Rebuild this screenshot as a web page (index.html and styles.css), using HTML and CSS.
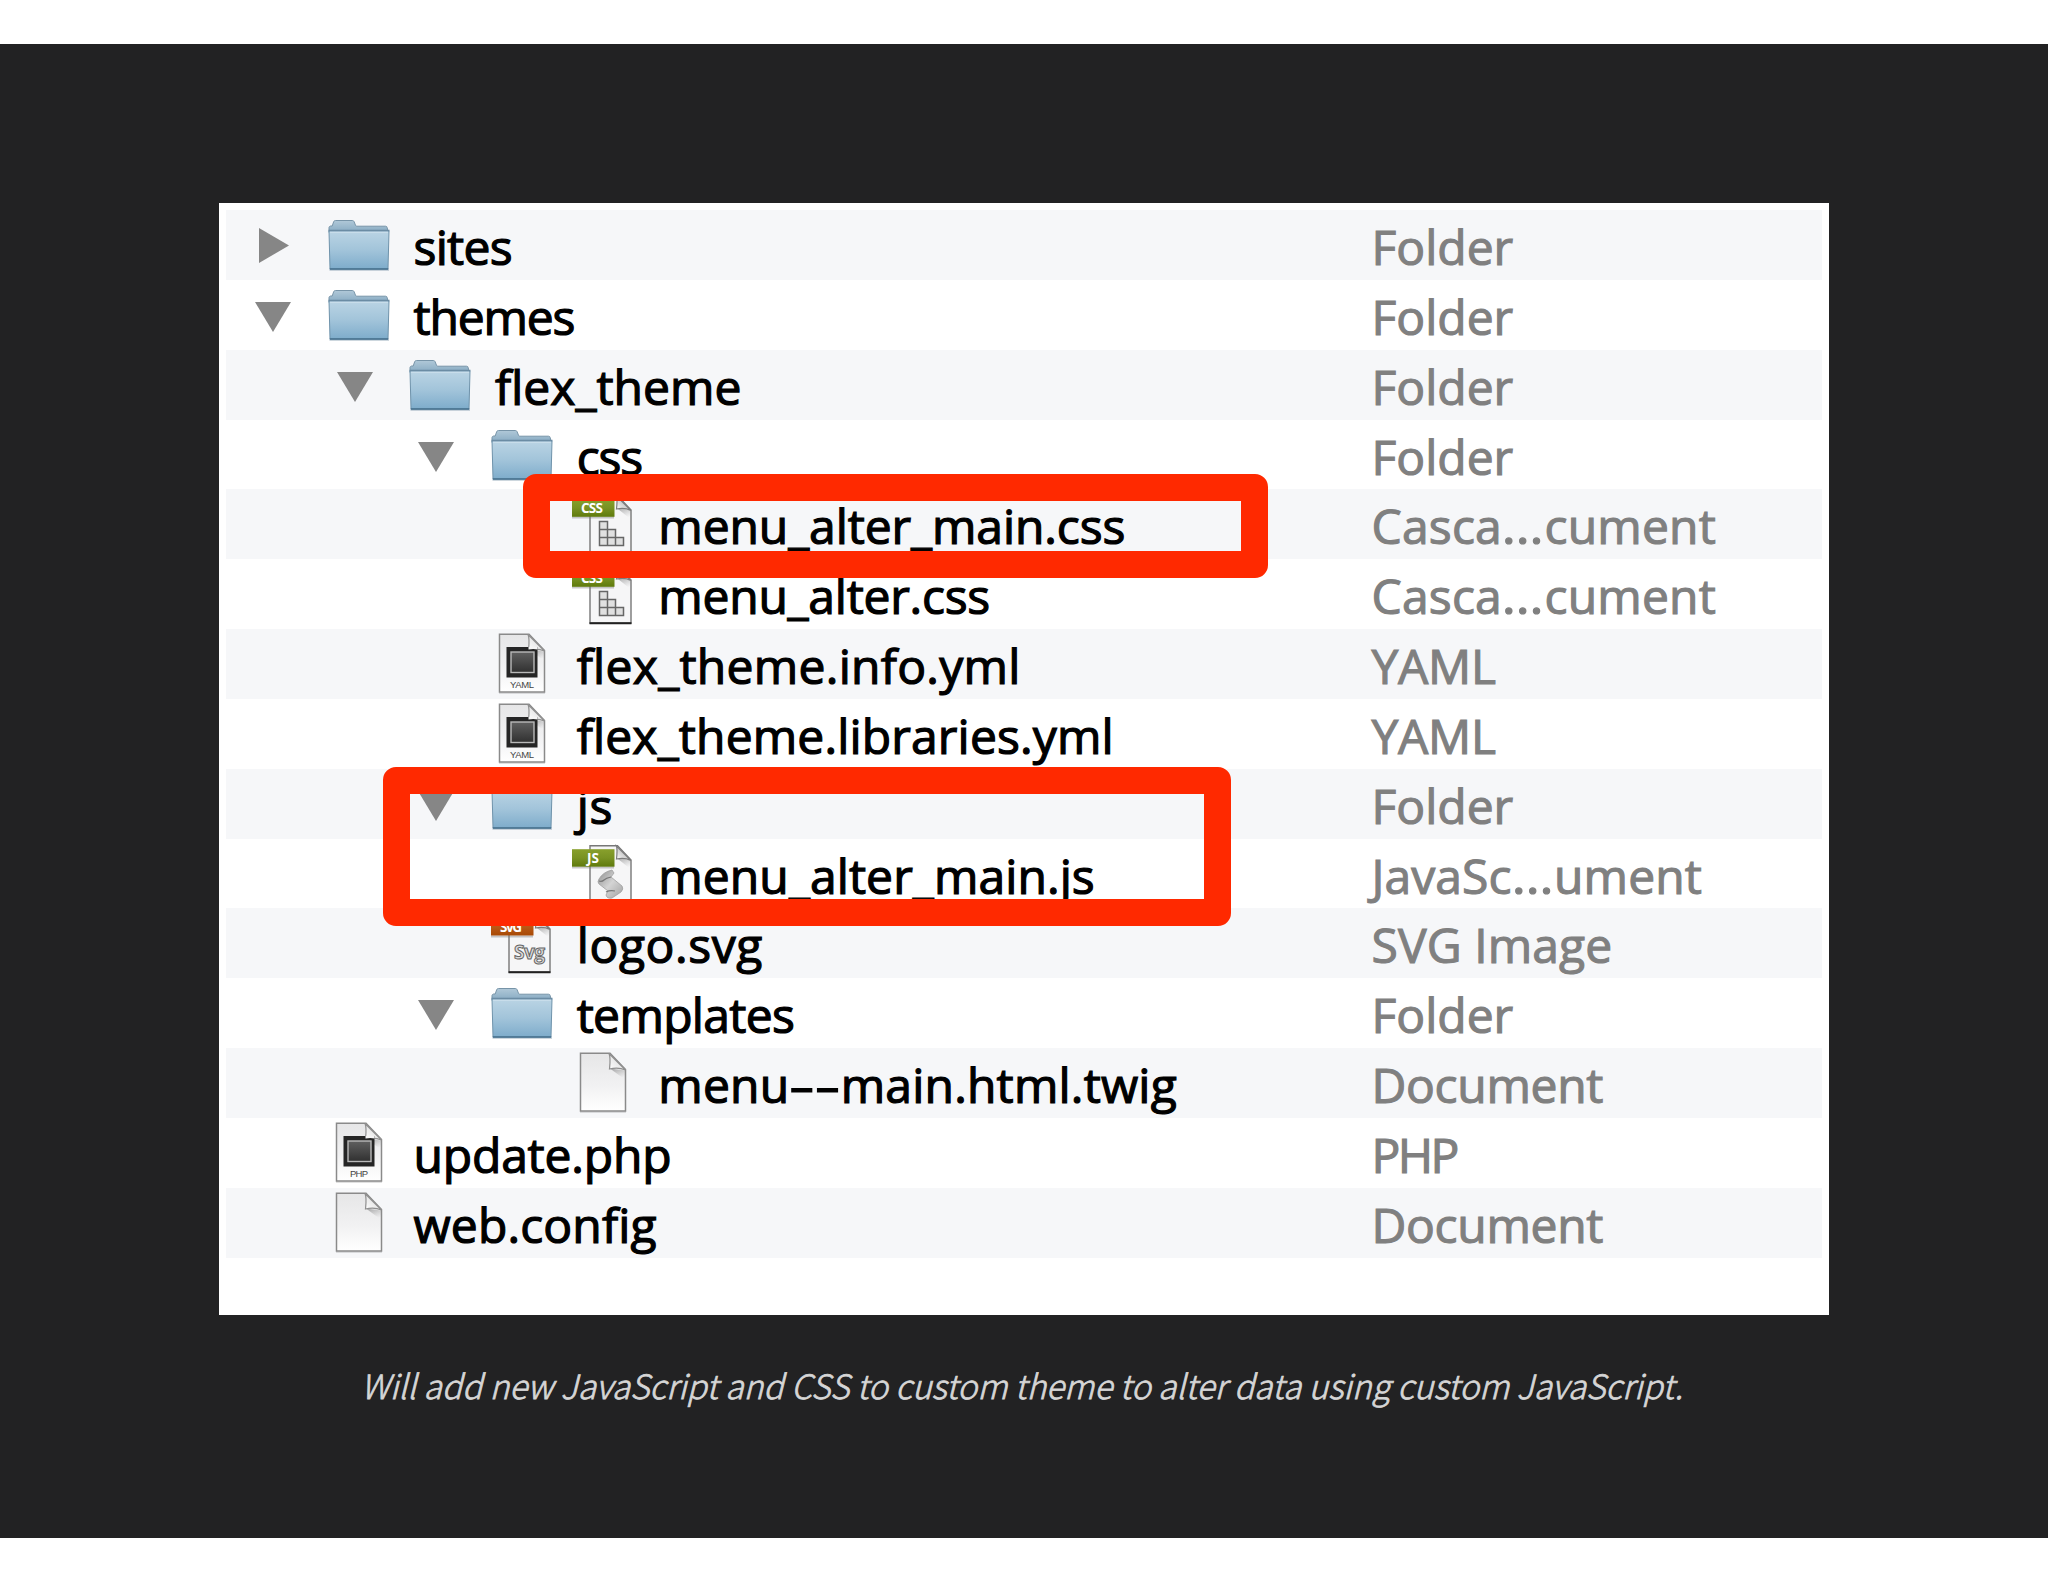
FILE: index.html
```
<!DOCTYPE html>
<html lang="en">
<head>
<meta charset="utf-8">
<title>Theme files</title>
<link rel="stylesheet" href="styles.css">
</head>
<body>
<svg class="defs" aria-hidden="true">
  <defs>
    <linearGradient id="gFront" x1="0" y1="0" x2="0" y2="1"><stop offset="0" stop-color="#bad4e4"/><stop offset=".5" stop-color="#a2c4da"/><stop offset="1" stop-color="#7eaccb"/></linearGradient>
    <linearGradient id="gBack" x1="0" y1="0" x2="0" y2="1"><stop offset="0" stop-color="#b0c8d8"/><stop offset="1" stop-color="#86aac2"/></linearGradient>
    <linearGradient id="gPage" x1="0" y1="0" x2="0" y2="1"><stop offset="0" stop-color="#e6e6e7"/><stop offset=".55" stop-color="#f1f1f2"/><stop offset="1" stop-color="#ffffff"/></linearGradient>
    <linearGradient id="gFold" x1="0" y1="1" x2="1" y2="0"><stop offset="0" stop-color="#ffffff"/><stop offset=".5" stop-color="#e8e8e8"/><stop offset="1" stop-color="#a8a8a8"/></linearGradient>
    <linearGradient id="gFoldDark" x1="0" y1="1" x2="1" y2="0"><stop offset="0" stop-color="#ffffff"/><stop offset=".45" stop-color="#cfcfcf"/><stop offset="1" stop-color="#777777"/></linearGradient>
    <linearGradient id="gShade" x1="0" y1="0" x2=".6" y2="1"><stop offset="0" stop-color="#777" stop-opacity=".65"/><stop offset="1" stop-color="#999" stop-opacity="0"/></linearGradient>
    <linearGradient id="gChip" x1="0" y1="0" x2="0" y2="1"><stop offset="0" stop-color="#606060"/><stop offset="1" stop-color="#303030"/></linearGradient>
    <linearGradient id="gGreen" x1="0" y1="0" x2="0" y2="1"><stop offset="0" stop-color="#88a02c"/><stop offset=".5" stop-color="#799223"/><stop offset="1" stop-color="#5f7a0c"/></linearGradient>
    <linearGradient id="gOrange" x1="0" y1="0" x2="0" y2="1"><stop offset="0" stop-color="#c9682a"/><stop offset="1" stop-color="#a84a05"/></linearGradient>
    <linearGradient id="gScroll" x1="0" y1="0" x2="1" y2="1"><stop offset="0" stop-color="#8e8e8e"/><stop offset=".5" stop-color="#d4d4d4"/><stop offset="1" stop-color="#a2a2a2"/></linearGradient>

    <symbol id="folder" viewBox="0 0 70 70">
      <path d="M5.5 58.8h59.5v2.2h-59.5z" fill="#5b7c93" opacity=".3"/>
      <path d="M5 22.500V17.500q0-1 1.500-1.500h1.700l1.500-4.300q.4-1.200 1.800-1.200h16.800q1.300 0 1.800 1.200l1.500 3.800q.3.700 1.200.7h28.700q1.500 0 1.700 1.500l.8 3.500z" fill="url(#gBack)" stroke="#7794a8" stroke-width="1"/>
      <path d="M5 21h60l-1 38H6z" fill="url(#gFront)" stroke="#6f93ab" stroke-width="1"/>
      <path d="M4.500 20.500h61" stroke="#6b8ca4" stroke-width="1.400"/>
      <path d="M6 22.200h58" stroke="#cfe2ee" stroke-width="1"/>
      <path d="M5.800 59h58.400" stroke="#456f8d" stroke-width="1.600"/>
    </symbol>
    <symbol id="page" viewBox="0 0 70 70">
      <path d="M12 64h46" stroke="#999" stroke-width="1.500" opacity=".4"/>
      <path d="M12.500 5.200h29.500L57.500 21.500V63H12.500z" fill="url(#gPage)" stroke="#8a8a8a" stroke-width="1.500"/>
      <path d="M42 20.500l4 3 11 8v-9z" fill="url(#gShade)"/>
      <path d="M41 5.500c1.800 4 1 10 .5 15.500C47 19.500 52 19.500 57.500 22z" fill="url(#gFold)" stroke="#8f8f8f" stroke-width="1.200"/>
    </symbol>
    <symbol id="chip" viewBox="0 0 70 70">
      <rect x="19.500" y="18" width="31" height="30.500" fill="#252525"/>
      <rect x="24" y="23" width="23" height="20.500" fill="url(#gChip)" stroke="#b9b9b9" stroke-width="1.400"/>
      <path d="M41.500 18v2.500q5-1 9 0V18z" fill="#f4f4f4"/>
    </symbol>
    <symbol id="badged" viewBox="0 0 70 70">
      <path d="M22 6.800h27.500L63 21V64H22z" fill="#f6f6f7" stroke="#777" stroke-width="1.400"/>
      <path d="M21.500 64.200h42" stroke="#222" stroke-width="2"/>
      <path d="M48.500 19l4 3 10 8v-9z" fill="url(#gShade)"/>
      <path d="M48.500 7c1 3.500.5 8.500 0 13 5-1.200 10-1 14.500 1.500z" fill="url(#gFoldDark)" stroke="#7c7c7c" stroke-width="1.200"/>
    </symbol>
    <symbol id="down" viewBox="0 0 36 30"><path d="M0 0h36L18 30z" fill="#868686"/></symbol>
    <symbol id="right" viewBox="0 0 30 35"><path d="M0 0v35L30 17.500z" fill="#868686"/></symbol>

    <symbol id="css" viewBox="0 0 70 70">
      <use href="#badged"/>
      <path d="M4 27.500h42v2H4z" fill="#777" opacity=".4"/>
      <rect x="4" y="10" width="42.500" height="17.800" fill="url(#gGreen)"/>
      <text x="24" y="23.800" class="tag" textLength="22">CSS</text>
      <path d="M31.500 32.500h8v8h-8zM31.500 40.500h8v8h-8zM39.500 40.500h8v8h-8zM31.500 48.500h8v8h-8zM39.500 48.500h8v8h-8zM47.500 48.500h8v8h-8z" fill="#e0e0e0" stroke="#666" stroke-width="1.500"/>
    </symbol>
    <symbol id="js" viewBox="0 0 70 70">
      <use href="#badged"/>
      <path d="M4 27.500h42v2H4z" fill="#777" opacity=".4"/>
      <rect x="4" y="10.200" width="42.500" height="17.500" fill="url(#gGreen)"/>
      <text x="25" y="23.800" class="tag" textLength="12">JS</text>
      <path d="M31 40q4-7 13-9l2 3-3 4 11 9q2 3-1 6l-9 6q-5 1-6-3l2-4-9-7q-2-2 0-5z" fill="url(#gScroll)" stroke="#a0a0a0" stroke-width=".8"/>
      <path d="M31 42q3 1 5-1t7-3M38 53q4-2 9-1" stroke="#777" stroke-width="1.200" fill="none"/>
    </symbol>
    <symbol id="svg" viewBox="0 0 70 70">
      <use href="#badged"/>
      <path d="M4 27.500h42v2H4z" fill="#777" opacity=".4"/>
      <rect x="4" y="10" width="42.500" height="17.500" fill="url(#gOrange)"/>
      <text x="24" y="23.800" class="tag" textLength="22">SVG</text>
      <text x="42.500" y="51" class="svgmark" textLength="31">Svg</text>
    </symbol>
  </defs>
</svg>

<main class="slide">
  <div class="finder">
    <div class="row l0"><span class="toggle"><svg class="right"><use href="#right"/></svg></span><svg class="icon"><use href="#folder"/></svg><span class="name" style="letter-spacing:-.7px">sites</span><span class="kind">Folder</span></div>
    <div class="row l0"><span class="toggle"><svg class="down"><use href="#down"/></svg></span><svg class="icon"><use href="#folder"/></svg><span class="name" style="letter-spacing:-1.2px">themes</span><span class="kind">Folder</span></div>
    <div class="row l1"><span class="toggle"><svg class="down"><use href="#down"/></svg></span><svg class="icon"><use href="#folder"/></svg><span class="name">flex_theme</span><span class="kind">Folder</span></div>
    <div class="row l2"><span class="toggle"><svg class="down"><use href="#down"/></svg></span><svg class="icon"><use href="#folder"/></svg><span class="name" style="letter-spacing:-1.2px">css</span><span class="kind">Folder</span></div>
    <div class="row l3"><span class="toggle"></span><svg class="icon"><use href="#css"/></svg><span class="name" style="letter-spacing:-.1px">menu_alter_main.css</span><span class="kind" style="letter-spacing:.2px">Casca<span class="dots">…</span>cument</span></div>
    <div class="row l3"><span class="toggle"></span><svg class="icon"><use href="#css"/></svg><span class="name" style="letter-spacing:-.25px">menu_alter.css</span><span class="kind" style="letter-spacing:.2px">Casca<span class="dots">…</span>cument</span></div>
    <div class="row l2"><span class="toggle"></span><svg class="icon" viewBox="0 0 70 70"><use href="#page"/><use href="#chip"/><text x="35" y="58.500" class="ext" textLength="24">YAML</text></svg><span class="name" style="letter-spacing:.28px">flex_theme.info.yml</span><span class="kind" style="letter-spacing:-.3px">YAML</span></div>
    <div class="row l2"><span class="toggle"></span><svg class="icon" viewBox="0 0 70 70"><use href="#page"/><use href="#chip"/><text x="35" y="58.500" class="ext" textLength="24">YAML</text></svg><span class="name" style="letter-spacing:.15px">flex_theme.libraries.yml</span><span class="kind" style="letter-spacing:-.3px">YAML</span></div>
    <div class="row l2"><span class="toggle"><svg class="down"><use href="#down"/></svg></span><svg class="icon"><use href="#folder"/></svg><span class="name" style="letter-spacing:.7px">js</span><span class="kind">Folder</span></div>
    <div class="row l3"><span class="toggle"></span><svg class="icon"><use href="#js"/></svg><span class="name" style="letter-spacing:.08px">menu_alter_main.js</span><span class="kind" style="letter-spacing:.1px">JavaSc<span class="dots">…</span>ument</span></div>
    <div class="row l2"><span class="toggle"></span><svg class="icon"><use href="#svg"/></svg><span class="name" style="letter-spacing:.6px">logo.svg</span><span class="kind" style="letter-spacing:.1px">SVG Image</span></div>
    <div class="row l2"><span class="toggle"><svg class="down"><use href="#down"/></svg></span><svg class="icon"><use href="#folder"/></svg><span class="name" style="letter-spacing:-.68px">templates</span><span class="kind">Folder</span></div>
    <div class="row l3"><span class="toggle"></span><svg class="icon"><use href="#page"/></svg><span class="name" style="letter-spacing:.2px">menu<span class="dashes">--</span>main.html.twig</span><span class="kind" style="letter-spacing:-.3px">Document</span></div>
    <div class="row l0"><span class="toggle"></span><svg class="icon" viewBox="0 0 70 70"><use href="#page"/><use href="#chip"/><text x="35" y="58.500" class="ext" textLength="18">PHP</text></svg><span class="name" style="letter-spacing:-.18px">update.php</span><span class="kind" style="letter-spacing:-2.600px">PHP</span></div>
    <div class="row l0"><span class="toggle"></span><svg class="icon"><use href="#page"/></svg><span class="name" style="letter-spacing:.14px">web.config</span><span class="kind" style="letter-spacing:-.3px">Document</span></div>
    <div class="mark mark-css"></div>
    <div class="mark mark-js"></div>
  </div>
  <p class="caption">Will add new JavaScript and CSS to custom theme to alter data using custom JavaScript.</p>
</main>
</body>
</html>
```
FILE: styles.css
```
* { box-sizing: border-box; }

body {
  margin: 0;
  padding-top: 44px;
  background: #fff;
  font-family: "Open Sans", "Noto Sans", sans-serif;
}

.defs { position: absolute; width: 0; height: 0; }

.slide {
  height: 1494px;
  padding-top: 159px;
  background: #222223;
}

.finder {
  position: relative;
  width: 1610px;
  height: 1112px;
  margin-left: 219px;
  padding: 7px 7px 0;
  background: #fff;
}

.row {
  display: flex;
  height: 69.85px;
  font-size: 48px;
  line-height: 69px;
  white-space: nowrap;
}
.row:nth-child(odd) { background: #f6f7f9; }

.l1 { padding-left: 81.6px; }
.l2 { padding-left: 163.2px; }
.l3 { padding-left: 244.8px; }

.toggle { flex: none; width: 97.5px; }
.toggle svg { display: block; }
.down { width: 36px; height: 30px; margin: 22px 0 0 29px; }
.right { width: 30px; height: 35px; margin: 18px 0 0 33px; }

.icon { flex: none; width: 70px; height: 70px; }

.name {
  flex: 1;
  padding: 2px 0 0 20px;
  color: #000;
  -webkit-text-stroke: 1.2px #000;
}

.kind {
  flex: none;
  width: 450.5px;
  padding-top: 2px;
  color: #808080;
  -webkit-text-stroke: 1.1px #808080;
}

.dashes {
  display: inline-block;
  margin-right: 20px;
  transform: scaleX(1.65);
  transform-origin: left;
}

.dots {
  display: inline-block;
  margin: 0 2.5px;
  transform: scaleX(1.12);
}

.tag {
  fill: #fff;
  font: 700 13.5px "Open Sans", sans-serif;
  text-anchor: middle;
}
.ext {
  fill: #444;
  font: 400 9.5px "Liberation Sans", sans-serif;
  text-anchor: middle;
}
.svgmark {
  fill: #dcdcdc;
  stroke: #666;
  stroke-width: 1px;
  font: 700 19px "Open Sans", sans-serif;
  text-anchor: middle;
}

/* Highlight frames drawn over the file list */
.mark {
  position: absolute;
  border: 27px solid #ff2900;
  border-radius: 13px;
}
.mark-css { left: 304px; top: 271px; width: 745px; height: 104px; }
.mark-js { left: 164px; top: 563.5px; width: 848px; height: 159.500px; }

.caption {
  margin: 42px 4px 0 0;
  color: #d6d6d6;
  font: italic 300 33.4px/56px "Noto Sans CJK SC", "Open Sans", sans-serif;
  text-align: center;
  -webkit-text-stroke: .75px #d6d6d6;
}
```
